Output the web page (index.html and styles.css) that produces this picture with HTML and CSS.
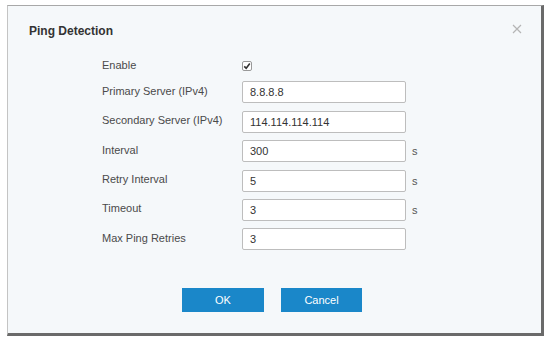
FILE: index.html
```html
<!DOCTYPE html>
<html>
<head>
<meta charset="utf-8">
<link rel="stylesheet" href="styles.css">
</head>
<body>
<div class="dialog">
  <div class="header">
    <span class="title">Ping Detection</span>
    <span class="close"><svg width="10" height="10" viewBox="0 0 10 10"><path d="M1 1 L9 9 M9 1 L1 9" stroke="#b5b5b5" stroke-width="1.2" fill="none"/></svg></span>
  </div>
  <div class="form">
    <div class="label enable-label">Enable</div>
    <div class="enable-cell"><span class="check"><svg width="8" height="8" viewBox="0 0 8 8"><path d="M1.2 4.3 L3.2 6.2 L6.8 1.6" fill="none" stroke="#333" stroke-width="1.6"/></svg></span></div>
    <div></div>

    <div class="label">Primary Server (IPv4)</div>
    <div class="input">8.8.8.8</div>
    <div></div>

    <div class="label">Secondary Server (IPv4)</div>
    <div class="input">114.114.114.114</div>
    <div></div>

    <div class="label">Interval</div>
    <div class="input">300</div>
    <div class="unit">s</div>

    <div class="label">Retry Interval</div>
    <div class="input">5</div>
    <div class="unit">s</div>

    <div class="label">Timeout</div>
    <div class="input">3</div>
    <div class="unit">s</div>

    <div class="label">Max Ping Retries</div>
    <div class="input">3</div>
    <div></div>
  </div>
  <div class="buttons">
    <div class="btn ok">OK</div>
    <div class="btn cancel">Cancel</div>
  </div>
</div>
</body>
</html>
```
FILE: styles.css
```css
html, body {
  margin: 0;
  padding: 0;
  background: #ffffff;
}
body {
  font-family: "Liberation Sans", Arial, sans-serif;
  color: #444;
}
.dialog {
  box-sizing: border-box;
  margin: 5px 0 0 7px;
  width: 537px;
  height: 331px;
  background: #f5f8fa;
  border-top: 1px solid #a8a8a8;
  border-left: 1px solid #c4c4c4;
  border-right: 3px solid #6a6a6a;
  border-bottom: 3px solid #6a6a6a;
}
.header {
  display: flex;
  justify-content: space-between;
  align-items: center;
  height: 48px;
  padding: 0 19px 0 21px;
}
.title {
  font-size: 12px;
  font-weight: bold;
  color: #333;
  margin-top: 1px;
}
.close {
  display: flex;
  margin-top: -3px;
}
.form {
  display: grid;
  grid-template-columns: 140px 164px 20px;
  grid-template-rows: 16px repeat(6, 22px);
  row-gap: 7.4px;
  margin: 4px 0 0 94px;
  font-size: 11px;
  align-items: center;
}
.enable-label {
  margin-top: -4px;
}
.label {
  color: #4a4a4a;
  margin-top: -3px;
}
.enable-cell {
  display: flex;
  align-items: center;
}
.check {
  display: inline-flex;
  align-items: center;
  justify-content: center;
  width: 8px;
  height: 8px;
  border: 1px solid #999;
  border-radius: 2px;
  background: #fff;
}
.input {
  box-sizing: border-box;
  height: 22px;
  border: 1px solid #bdbdbd;
  border-radius: 2px;
  background: #fff;
  display: flex;
  align-items: center;
  padding-left: 7px;
  color: #333;
}
.unit {
  padding-left: 6px;
  color: #555;
}
.buttons {
  display: flex;
  gap: 17px;
  margin: 38px 0 0 174px;
}
.btn {
  height: 24px;
  display: flex;
  align-items: center;
  justify-content: center;
  background: #1a87c9;
  color: #fff;
  font-size: 11px;
}
.ok { width: 82px; }
.cancel { width: 81px; }
```
